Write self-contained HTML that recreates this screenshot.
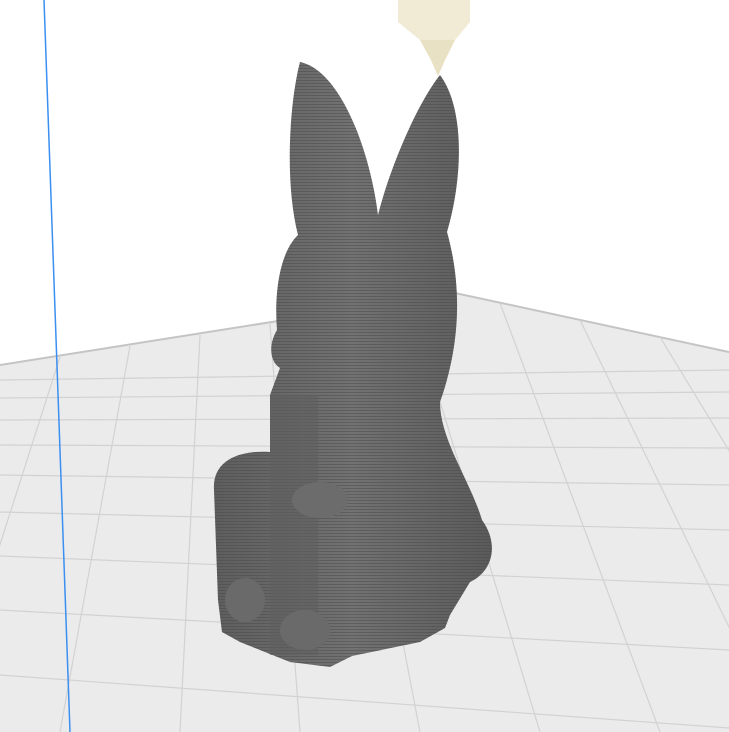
<!DOCTYPE html>
<html><head><meta charset="utf-8"><style>
html,body{margin:0;padding:0;background:#fff;width:729px;height:732px;overflow:hidden}
svg{display:block}
</style></head><body>
<svg width="729" height="732" viewBox="0 0 729 732" xmlns="http://www.w3.org/2000/svg">
<defs>
<linearGradient id="bg" x1="0" y1="0" x2="1" y2="0">
<stop offset="0" stop-color="#5e5e5e"/><stop offset="0.5" stop-color="#727272"/><stop offset="1" stop-color="#5a5a5a"/>
</linearGradient>
<pattern id="ln" width="4" height="3" patternUnits="userSpaceOnUse">
<rect width="4" height="3" fill="none"/><rect y="2" width="4" height="1" fill="#4a4a4a" opacity="0.5"/>
</pattern>
</defs>
<rect width="729" height="732" fill="#ffffff"/>
<polygon points="0,365 455,293 729,352 729,732 0,732" fill="#ebebeb"/>
<polyline points="0,365 455,293 729,352" fill="none" stroke="#c4c4c4" stroke-width="2"/>
<g stroke="#d2d2d2" stroke-width="1.2" fill="none">
<line x1="0" y1="380" x2="729" y2="370"/>
<line x1="0" y1="398" x2="729" y2="392"/>
<line x1="0" y1="420" x2="729" y2="418"/>
<line x1="0" y1="445" x2="729" y2="448"/>
<line x1="0" y1="475" x2="729" y2="485"/>
<line x1="0" y1="512" x2="729" y2="530"/>
<line x1="0" y1="556" x2="729" y2="585"/>
<line x1="0" y1="610" x2="729" y2="650"/>
<line x1="0" y1="675" x2="729" y2="728"/>
<line x1="60" y1="357" x2="-60" y2="732"/>
<line x1="130" y1="346" x2="60" y2="732"/>
<line x1="200" y1="335" x2="180" y2="732"/>
<line x1="270" y1="324" x2="300" y2="732"/>
<line x1="340" y1="313" x2="420" y2="732"/>
<line x1="410" y1="302" x2="540" y2="732"/>
<line x1="500" y1="303" x2="660" y2="732"/>
<line x1="580" y1="320" x2="780" y2="732"/>
<line x1="660" y1="337" x2="900" y2="732"/>
</g>
<line x1="44" y1="0" x2="70" y2="732" stroke="#3b8ff0" stroke-width="1.5"/>
<polygon points="398,0 470,0 470,22 455,40 445,60 438,76 431,60 420,40 398,22" fill="#f1ebd5"/>
<polygon points="420,40 455,40 445,60 438,76 431,60" fill="#e9e1c4"/>
<g>
<path d="M300,62 C290,100 284,180 298,235 C280,252 274,292 277,330 C268,345 270,362 280,368 L270,395 L270,452 C240,450 212,460 214,490 L218,600 L222,632 L240,642 L290,662 L330,667 L352,656 L420,642 L445,628 L450,615 L470,582 C492,572 500,545 482,520 C470,480 440,440 440,402 C455,360 466,300 447,232 C462,182 466,110 440,75 C420,100 392,160 378,215 C370,150 340,70 300,62 Z" fill="url(#bg)"/>
<path d="M300,62 C290,100 284,180 298,235 C280,252 274,292 277,330 C268,345 270,362 280,368 L270,395 L270,452 C240,450 212,460 214,490 L218,600 L222,632 L240,642 L290,662 L330,667 L352,656 L420,642 L445,628 L450,615 L470,582 C492,572 500,545 482,520 C470,480 440,440 440,402 C455,360 466,300 447,232 C462,182 466,110 440,75 C420,100 392,160 378,215 C370,150 340,70 300,62 Z" fill="url(#ln)"/>
<rect x="270" y="395" width="48" height="260" fill="#5f5f5f" opacity="0.6"/>
<ellipse cx="320" cy="500" rx="28" ry="18" fill="#6c6c6c"/>
<ellipse cx="305" cy="630" rx="25" ry="20" fill="#6a6a6a"/>
<ellipse cx="245" cy="600" rx="20" ry="22" fill="#6a6a6a"/>
</g>
</svg>
</body></html>
